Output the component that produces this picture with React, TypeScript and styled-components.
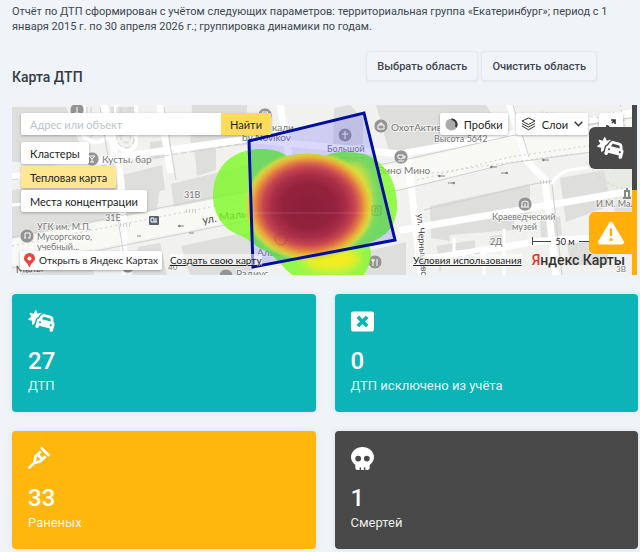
import React from "react";
import styled, { createGlobalStyle, css } from "styled-components";
import {
  FaCarBurst,
  FaCrutch,
  FaSkull,
  FaTriangleExclamation,
} from "react-icons/fa6";
import { FaWindowClose } from "react-icons/fa";

const GlobalStyle = createGlobalStyle`
  *, *::before, *::after { box-sizing: border-box; }
  body {
    margin: 0;
    background: #eef4f8;
    color: #3f4650;
    font-family: Roboto, "Noto Sans", sans-serif;
    font-size: 11px;
  }
  button, input { font: inherit; color: inherit; }
`;

const Page = styled.main`
  padding: 4px 2px 3px 12px;
  overflow: hidden;
`;

const Summary = styled.p`
  margin: 0;
  padding-right: 12px;
  font-size: 11px;
  line-height: 15px;
`;

const MapHeader = styled.header`
  display: flex;
  justify-content: space-between;
  align-items: flex-start;
  margin: 17px 41px 19px 0;
`;

const Title = styled.h2`
  margin: 17px 0 0;
  font-size: 14px;
  line-height: 18px;
  font-weight: 500;
  color: #343b46;
`;

const Actions = styled.div`
  display: flex;
  gap: 3px;
`;

const AreaButton = styled.button`
  height: 30px;
  padding: 0 10px;
  border: 1px solid #e4e9ef;
  border-radius: 4px;
  background: #f1f5f9;
  box-shadow: 0 1px 2px rgba(60, 80, 110, 0.08);
  font-size: 11px;
  font-weight: 500;
  white-space: nowrap;
`;

const MapPanel = styled.section`
  position: relative;
  height: 170px;
  margin-right: 1px;
  overflow: hidden;
  background: #efefee;
  color: #222;
  font-family: Lato, "Noto Sans", sans-serif;
  font-size: 11px;
`;

const MapCanvas = styled.svg`
  display: block;
  width: 100%;
  height: 100%;
`;

const surface = css`
  border: 0;
  border-radius: 2px;
  background: #fff;
  box-shadow: 0 1px 3px rgba(0, 0, 0, 0.28);
`;

const LeftControls = styled.div`
  position: absolute;
  top: 8px;
  left: 9px;
  display: flex;
  flex-direction: column;
  align-items: flex-start;
  gap: 2px;
`;

const Search = styled.form`
  ${surface}
  display: flex;
  height: 22px;
  width: 250px;
  margin-bottom: 5px;
  overflow: hidden;
`;

const SearchInput = styled.input`
  flex: 1;
  min-width: 0;
  padding: 0 9px;
  border: 0;
  background: transparent;
  font-size: 11px;
  &::placeholder { color: #bcc2ca; opacity: 1; }
`;

const SearchButton = styled.button`
  width: 50px;
  padding: 0;
  border: 0;
  background: #ffdb5c;
`;

const MapButton = styled.button<{ $active?: boolean }>`
  ${surface}
  display: flex;
  align-items: center;
  gap: 6px;
  height: 22px;
  padding: 0 9px;
  white-space: nowrap;
  ${(p) => p.$active && "background: #ffe692;"}
`;

const RightControls = styled.div`
  position: absolute;
  top: 8px;
  right: 14px;
  display: flex;
  gap: 8px;
`;

const ToolButton = styled(MapButton)`
  padding: 0 5px;
`;

const ExpandButton = styled(MapButton)`
  justify-content: center;
  width: 24px;
  padding: 0;
  margin-left: 3px;
`;

const BottomBar = styled.div`
  position: absolute;
  left: 8px;
  right: 12px;
  bottom: 5px;
  display: flex;
  align-items: center;
  height: 20px;
  font-size: 10px;
`;

const OpenLink = styled.a`
  ${surface}
  display: flex;
  align-items: center;
  gap: 4px;
  height: 19px;
  padding: 0 4px;
  color: #222;
  text-decoration: none;
  white-space: nowrap;
`;

const MapLink = styled.a<{ $end?: boolean }>`
  margin-left: ${(p) => (p.$end ? "auto" : "8px")};
  color: #222;
  font-size: 10px;
  line-height: 12px;
  background: rgba(255, 255, 255, 0.55);
  white-space: nowrap;
`;

const Logo = styled.span`
  margin-left: 10px;
  font-size: 14px;
  font-weight: 500;
  line-height: 20px;
  color: #333;
  white-space: nowrap;
  font-family: Roboto, sans-serif;
  em { color: #e3302c; font-style: normal; }
`;

const Scale = styled.div`
  position: absolute;
  right: 40px;
  bottom: 26px;
  display: flex;
  align-items: center;
  gap: 4px;
  width: 65px;
  height: 16px;
  font-size: 9px;
  white-space: nowrap;
`;

const ScaleLine = styled.i<{ $start?: boolean }>`
  flex: 1;
  height: 8px;
  border-left: ${(p) => (p.$start ? "1px solid #444" : "0")};
  background: linear-gradient(#444, #444) center / 100% 1px no-repeat;
`;

const Layers = styled.aside`
  position: absolute;
  top: 0;
  right: 0;
  bottom: 0;
  display: flex;
  flex-direction: column;
`;

const LayerHalf = styled.div<{ $color: string }>`
  flex: 1;
  display: flex;
  align-items: center;
  padding-right: 5px;
  background: linear-gradient(${(p) => p.$color}, ${(p) => p.$color}) right / 5px 100% no-repeat;
`;

const LayerTab = styled.button<{ $color: string }>`
  display: grid;
  place-items: center;
  width: 43px;
  height: 42px;
  padding: 0;
  border: 0;
  border-radius: 6px 0 0 6px;
  background: ${(p) => p.$color};
  color: #fff;
`;

const Cards = styled.section`
  display: grid;
  grid-template-columns: 1fr 1fr;
  gap: 19px;
  margin-top: 19px;
`;

const Card = styled.article<{ $color: string }>`
  height: 118px;
  padding: 16px;
  border-radius: 4px;
  background: ${(p) => p.$color};
  box-shadow: 0 0 6px rgba(110, 120, 130, 0.14);
  color: #fff;
`;

const CardIcon = styled.div`
  display: flex;
  align-items: center;
  height: 22px;

  svg { flex: none; }
`;

const Count = styled.strong`
  display: block;
  margin-top: 15px;
  font-size: 24px;
  line-height: 28px;
  font-weight: 500;
`;

const Label = styled.span`
  display: block;
  margin-top: 3px;
  font-size: 13px;
  line-height: 16px;
  color: rgba(255, 255, 255, 0.92);
`;

type Place = { x: number; y: number; text: string; size?: number; turn?: number; dark?: boolean };

const places: Place[] = [
  { x: 102, y: 163, text: "Кусты. бар" },
  { x: 184, y: 198, text: "31В", size: 9 },
  { x: 105, y: 221, text: "31Е", size: 9 },
  { x: 37, y: 230, text: "УГК им. М.П.", size: 9 },
  { x: 37, y: 240, text: "Мусоргского,", size: 9 },
  { x: 37, y: 250, text: "учебный...", size: 9 },
  { x: 16, y: 273, text: "Малы", turn: -3, dark: true },
  { x: 168, y: 270, text: "40", size: 8 },
  { x: 272, y: 131, text: "кали" },
  { x: 242, y: 141, text: "by Novikov" },
  { x: 327, y: 152, text: "Большой", size: 9 },
  { x: 327, y: 162, text: "Златоуст", size: 9 },
  { x: 391, y: 131, text: "ОхотАктив" },
  { x: 434, y: 142, text: "Высота 5642", size: 9 },
  { x: 378, y: 174, text: "Вино Мино" },
  { x: 203, y: 224, text: "ул. Малышева", size: 11, turn: -9, dark: true },
  { x: 257, y: 256, text: "Альфа-Банк" },
  { x: 236, y: 277, text: "Радиус" },
  { x: 417, y: 214, text: "ул. Чернышевского", size: 9, turn: 86, dark: true },
  { x: 492, y: 220, text: "Краеведческий", size: 9 },
  { x: 512, y: 230, text: "музей", size: 9 },
  { x: 596, y: 207, text: "И.М. Мал", size: 9 },
  { x: 490, y: 245, text: "2Д", size: 9 },
  { x: 616, y: 272, text: "3В", size: 8 },
];

const glass = "M-3-3H3L0 0ZM0 0V3M-2 3H2";
const pins = [
  { x: 77, y: 110, mark: "M0-3V2M-2 3H2" },
  { x: 92, y: 159, mark: glass },
  { x: 27, y: 236, mark: "M-2 2V-3H3V2M-3 2H-1M1 2H3" },
  { x: 265, y: 115, mark: glass },
  { x: 345, y: 135, mark: "M0-4V4M-3-1H3" },
  { x: 381, y: 126, mark: "M-3-1H3V3H-3ZM-1-1V-3H1V-1" },
  { x: 401, y: 157, mark: "M-3-2H2V1Q0 3-3 1ZM2-1H4V1H2M-3 4H3" },
  { x: 375, y: 262, mark: "M-2-3V4M-3-3V-1H-1V-3M2-3V4" },
  { x: 281, y: 239, mark: "M-3 3V-1L0-3L3-1V3" },
  { x: 226, y: 276, mark: "" },
  { x: 525, y: 204, mark: "M-3 3V-2L0-3L3-2V3M0-1V3M-4 3H4" },
  { x: 128, y: 266, mark: "" },
];

const POLYGON = "249,141 364,113 395,240 253,267";

function CityMap() {
  return (
    <MapCanvas viewBox="12 105 625 170" preserveAspectRatio="xMidYMid slice" role="img" aria-label="Тепловая карта ДТП">
      <defs>
        <filter id="soft" x="-30%" y="-30%" width="160%" height="160%">
          <feGaussianBlur stdDeviation="5" />
        </filter>
        <radialGradient id="heat">
          <stop offset="0" stopColor="#8c1f3b" />
          <stop offset="0.4" stopColor="#94223d" />
          <stop offset="0.57" stopColor="#aa2e47" />
          <stop offset="0.69" stopColor="#c54450" />
          <stop offset="0.78" stopColor="#de7147" />
          <stop offset="0.86" stopColor="#eaaa3c" />
          <stop offset="0.93" stopColor="#e0d63c" stopOpacity="0.85" />
          <stop offset="1" stopColor="#b9ea3c" stopOpacity="0" />
        </radialGradient>
        <clipPath id="blob">
          <path d="M213 196C213 168 231 149 261 149C273 149 279 151 287 156C301 153 315 153 325 156C334 151 351 151 364 154C385 161 397 181 397 205C397 228 384 238 368 243C374 253 370 267 363 275H292C285 269 278 260 268 252C253 246 250 239 239 235C223 229 213 214 213 196Z" />
        </clipPath>
      </defs>

      <rect x="12" y="105" width="625" height="170" fill="#f1f1f0" />
      <g fill="#dededd">
        <path d="M12 107H66L80 145L20 162H12ZM110 107H134L137 134L115 137ZM150 142L170 140L171 157L149 160ZM192 105H247V145L190 150Z" />
        <path d="M118 176L162 165L165 190L126 198ZM171 184L248 165V205L175 214ZM194 146L216 143V170L197 176Z" />
        <path d="M12 190L70 181L160 187L156 215L12 241ZM38 209L111 198L117 213L47 229Z" />
        <path d="M138 247L160 243L167 275H132ZM181 246L252 231V275H190ZM20 248L90 236L94 275H20Z" />
        <path d="M334 108L350 105L363 118V144L333 147ZM376 105H431V144L408 158L389 151Z" />
        <path d="M404 105H486L507 136L424 150L404 142ZM529 135L606 113L611 125L531 148Z" />
        <path d="M430 206L530 184V213L514 217V230L450 235V241L431 238ZM560 178L604 170L612 205L566 222ZM540 220L560 216L562 235L541 240ZM490 236L505 234V250L488 250ZM612 195L637 190V221L617 224Z" />
        <path d="M350 255L406 242V275H350ZM436 246L475 240V258L440 259ZM567 242H608V265H570Z" />
      </g>
      <path d="M604 171L637 165V200L612 205Z" fill="#e8eae5" />
      <g fill="none" stroke="#fff" strokeLinecap="round">
        <path d="M12 252L205 214L404 175L510 150L637 132" strokeWidth="26" stroke="#f8f8f5" />
        <path d="M12 177L118 157L247 139L400 154L637 112M408 158L421 275M510 105L526 160L545 180L556 275M104 105L121 180L125 275M160 105L170 170M402 230L637 190M436 258L540 241L637 236M280 105L289 156" strokeWidth="7" />
        <path d="M84 105V137Q96 147 108 137L106 105M116 105V144Q128 158 136 144V105" strokeWidth="4" />
        <path d="M12 205L110 197M426 257L484 249V275M504 230V275M552 184Q558 170 578 169L637 158M454 239V252H484" strokeWidth="3" />
      </g>
      <g fill="none" stroke="#d0d0d0" strokeWidth="1">
        <path d="M12 237L205 199L404 160L510 136L637 117M12 268L205 229L404 189L510 163L637 146M424 210L534 184L552 181M100 107L127 275M164 107L176 180M513 105L529 157M552 184L562 275" />
        <path d="M87 107V134M91 107V138M117 107V142Q127 154 134 142V107M121 107V140Q127 146 130 140V107M12 180L247 143M430 262L480 253M440 271V259H477" strokeDasharray="6 3" />
        <path d="M12 246L205 208L404 168M417 180L510 157L637 139M586 162Q600 184 627 190M541 112L604 118M620 105L626 130M427 174L572 154" strokeDasharray="2 3" />
        <path d="M540 182h12M54 198h10M120 225h10M186 211h12" strokeWidth="4" strokeDasharray="1 2" />
      </g>
      <g stroke="#888" strokeWidth="1" fill="#888">
        <path d="M438 176h7m-7 0 2-1v2ZM490 167h7m-7 0 2-1v2ZM542 160h7m-7 0 2-1v2ZM448 183h7m0 0-2-1v2ZM501 173h7m0 0-2-1v2ZM178 226h6m-6 0 2-1v2ZM137 236h4M189 233h5" />
      </g>
      {pins.map((pin) => (
        <g key={`${pin.x}-${pin.y}`} transform={`translate(${pin.x} ${pin.y})`}>
          <circle r="7" fill="#949494" stroke="#fff" strokeOpacity="0.6" />
          <path d={pin.mark} fill="none" stroke="#fff" />
        </g>
      ))}
      <g>
        <rect x="149" y="216" width="10" height="9" rx="1" fill="#596070" />
        <path d="M151 222v-4h3v4m2-4v4m-5 0h6" stroke="#fff" fill="none" />
        <path d="M625 197v-6h4v6m-6 1h8M627 188v3" stroke="#888" strokeWidth="2" fill="none" />
      </g>
      {places.map((p) => (
        <text
          key={p.text}
          x={p.x}
          y={p.y}
          fontSize={p.size ?? 10}
          fill={p.dark ? "#444" : "#777"}
          stroke="#fff"
          strokeWidth="2"
          strokeOpacity="0.6"
          paintOrder="stroke"
          transform={p.turn ? `rotate(${p.turn} ${p.x} ${p.y})` : undefined}
        >
          {p.text}
        </text>
      ))}

      <polygon points={POLYGON} fill="#5050ff" fillOpacity="0.22" />
      <g clipPath="url(#blob)">
        <rect x="205" y="140" width="200" height="140" fill="#7dfa24" opacity="0.8" />
        <polygon points={POLYGON} fill="#2c98a0" fillOpacity="0.28" />
        <ellipse cx="331" cy="259" rx="29" ry="13" fill="#f2ed24" filter="url(#soft)" />
        <ellipse cx="353" cy="200" rx="19" ry="37" fill="#dede3c" filter="url(#soft)" />
        <ellipse cx="309" cy="206" rx="66" ry="56" fill="url(#heat)" />
      </g>
      <path d="M251 213H374" stroke="#fff" opacity="0.14" />
      <g fill="none" stroke="#333" opacity="0.25">
        <circle cx="281" cy="239" r="6" />
        <rect x="372" y="206" width="9" height="9" rx="1" />
        <path d="M375 213v-5h3v5" />
      </g>
      <polygon points={POLYGON} fill="none" stroke="#000e9c" strokeWidth="3" />
    </MapCanvas>
  );
}

const cards = [
  { color: "#0cb3b7", icon: <FaCarBurst size={28} />, count: 27, label: "ДТП" },
  { color: "#0cb3b7", icon: <FaWindowClose size={23} />, count: 0, label: "ДТП исключено из учёта" },
  { color: "#ffb60d", icon: <FaCrutch size={22} />, count: 33, label: "Раненых" },
  { color: "#494949", icon: <FaSkull size={23} />, count: 1, label: "Смертей" },
];

export default function App() {
  return (
    <>
      <GlobalStyle />
      <Page>
        <Summary>
          Отчёт по ДТП сформирован с учётом следующих параметров: территориальная группа «Екатеринбург»; период с 1
          января 2015 г. по 30 апреля 2026 г.; группировка динамики по годам.
        </Summary>
        <MapHeader>
          <Title>Карта ДТП</Title>
          <Actions>
            <AreaButton type="button">Выбрать область</AreaButton>
            <AreaButton type="button">Очистить область</AreaButton>
          </Actions>
        </MapHeader>

        <MapPanel>
          <CityMap />
          <LeftControls>
            <Search onSubmit={(e: React.FormEvent) => e.preventDefault()}>
              <SearchInput aria-label="Адрес или объект" placeholder="Адрес или объект" />
              <SearchButton type="submit">Найти</SearchButton>
            </Search>
            <MapButton type="button">Кластеры</MapButton>
            <MapButton type="button" $active>Тепловая карта</MapButton>
            <MapButton type="button">Места концентрации</MapButton>
          </LeftControls>
          <RightControls>
            <ToolButton type="button">
              <svg width="13" height="13" viewBox="0 0 13 13" aria-hidden="true">
                <circle cx="6.5" cy="6.5" r="6" fill="#aaa" />
                <path d="M6.5 .5a6 6 0 0 1 5.2 9L10 8.4A4.5 4.5 0 0 0 6.5 2Z" fill="#333" />
              </svg>
              Пробки
            </ToolButton>
            <ToolButton type="button">
              <svg width="15" height="14" viewBox="0 0 15 14" fill="none" stroke="#333" aria-hidden="true">
                <path d="M7.5 1 14 4 7.5 7.5 1 4ZM1 6.5 7.5 10 14 6.5M1 9 7.5 12.8 14 9" />
              </svg>
              Слои
              <svg width="9" height="6" viewBox="0 0 9 6" fill="none" stroke="#333" strokeWidth="1.4" aria-hidden="true">
                <path d="m.7.8 3.8 4 3.8-4" />
              </svg>
            </ToolButton>
            <ExpandButton type="button" aria-label="На весь экран">
              <svg width="12" height="12" viewBox="0 0 12 12" fill="none" stroke="#333" strokeWidth="1.6" aria-hidden="true">
                <path d="M6 2h4v4M10 2 7 5M2 7v3h3M2 10l2-2" />
              </svg>
            </ExpandButton>
          </RightControls>
          <Scale>
            <ScaleLine $start />
            50 м
            <ScaleLine />
          </Scale>
          <BottomBar>
            <OpenLink href="#open">
              <svg width="11" height="14" viewBox="0 0 11 14" aria-hidden="true">
                <path d="M5.5 0A5.5 5.5 0 0 1 11 5.5C11 9 6.7 9.6 6.1 14H4.9C4.3 9.6 0 9 0 5.5A5.5 5.5 0 0 1 5.5 0Z" fill="#e8453c" />
                <circle cx="5.5" cy="5.5" r="2" fill="#fff" />
              </svg>
              Открыть в Яндекс Картах
            </OpenLink>
            <MapLink href="#create">Создать свою карту</MapLink>
            <MapLink href="#terms" $end>Условия использования</MapLink>
            <Logo><em>Я</em>ндекс Карты</Logo>
          </BottomBar>
          <Layers>
            <LayerHalf $color="#494949">
              <LayerTab type="button" $color="#494949" aria-label="ДТП"><FaCarBurst size={28} /></LayerTab>
            </LayerHalf>
            <LayerHalf $color="#ffae0a">
              <LayerTab type="button" $color="#ffae0a" aria-label="Места концентрации ДТП"><FaTriangleExclamation size={26} /></LayerTab>
            </LayerHalf>
          </Layers>
        </MapPanel>

        <Cards>
          {cards.map((card) => (
            <Card key={card.label} $color={card.color}>
              <CardIcon>{card.icon}</CardIcon>
              <Count>{card.count}</Count>
              <Label>{card.label}</Label>
            </Card>
          ))}
        </Cards>
      </Page>
    </>
  );
}
